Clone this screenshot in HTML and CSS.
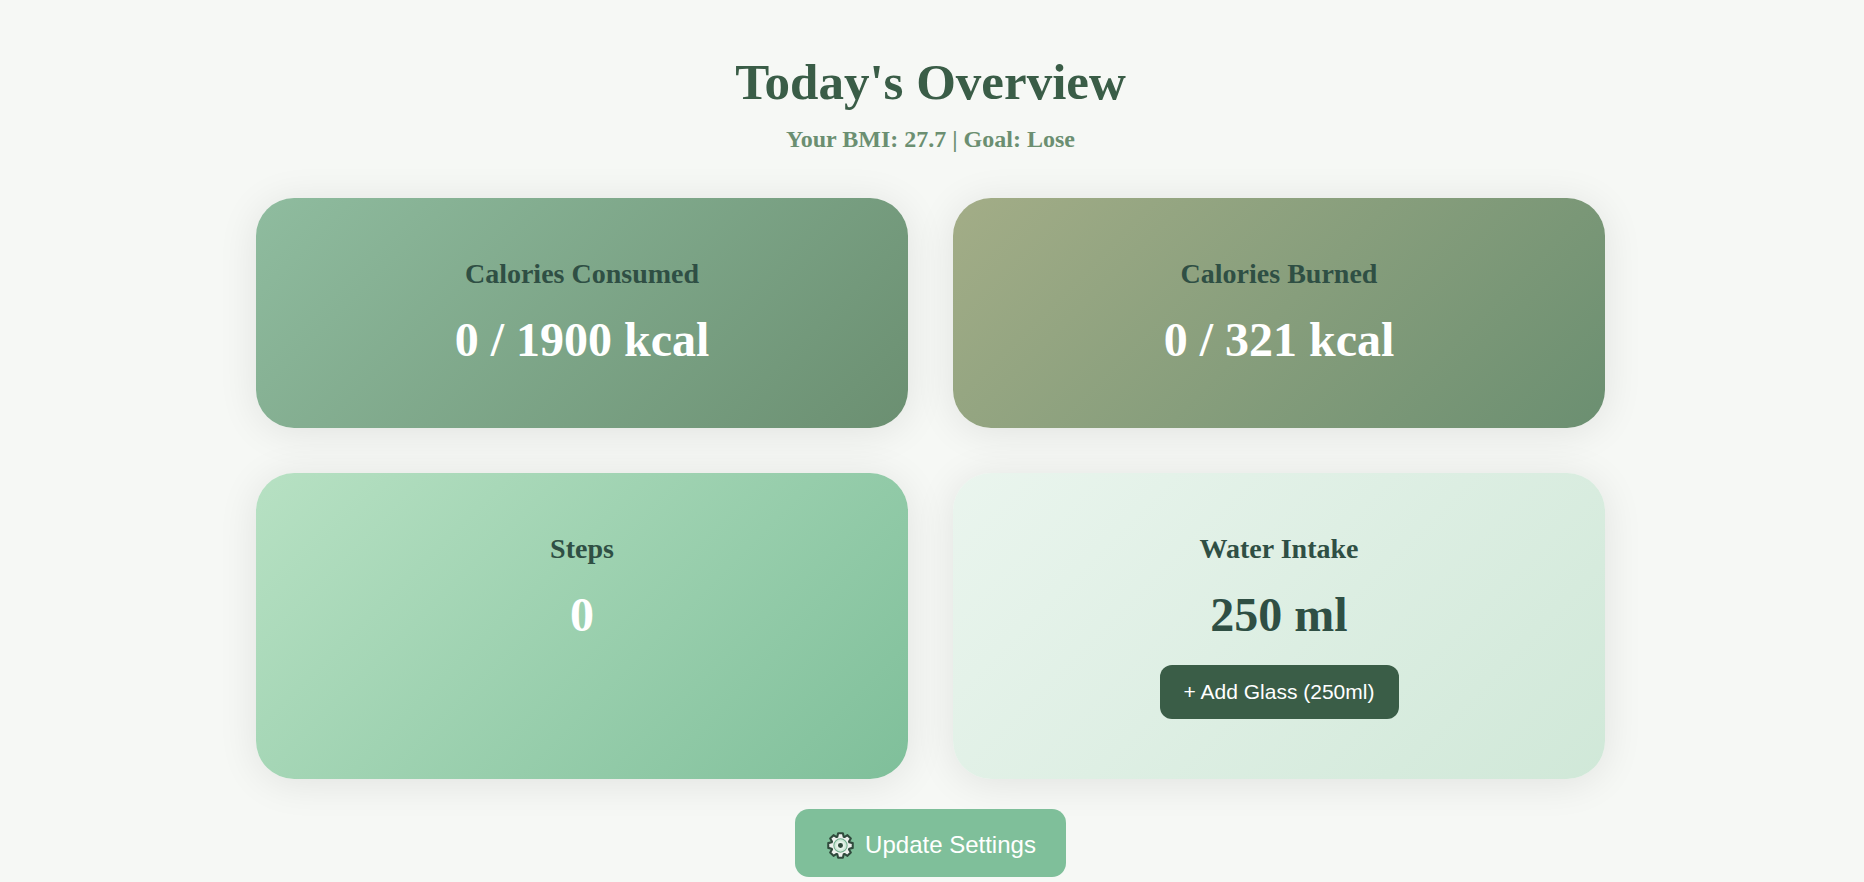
FILE: index.html
```html
<!DOCTYPE html>
<html lang="en">
<head>
    <meta charset="UTF-8">
    <meta name="viewport" content="width=device-width, initial-scale=1.0">
    <title>Today's Overview</title>
    <link rel="stylesheet" href="styles.css">
</head>
<body>
    <main class="dashboard">
        <h1>Today's Overview</h1>
        <p class="subtitle">Your BMI: 27.7 | Goal: Lose</p>

        <div class="cards">
            <div class="card card-consumed">
                <h3>Calories Consumed</h3>
                <div class="value">0 / 1900 kcal</div>
            </div>
            <div class="card card-burned">
                <h3>Calories Burned</h3>
                <div class="value">0 / 321 kcal</div>
            </div>
            <div class="card card-steps">
                <h3>Steps</h3>
                <div class="value">0</div>
            </div>
            <div class="card card-water">
                <h3>Water Intake</h3>
                <div class="value">250 ml</div>
                <button class="btn-water">+ Add Glass (250ml)</button>
            </div>
        </div>

        <a href="#" class="btn-settings">
            <svg class="gear" viewBox="-13 -13 26 26" width="27" height="27" aria-hidden="true">
                <path d="M-2.29-11.78L2.29-11.78L3.08-8.46L3.8-8.16L6.71-9.95L9.95-6.71L8.16-3.8L8.46-3.08L11.78-2.29L11.78 2.29L8.46 3.08L8.16 3.8L9.95 6.71L6.71 9.95L3.8 8.16L3.08 8.46L2.29 11.78L-2.29 11.78L-3.08 8.46L-3.8 8.16L-6.71 9.95L-9.95 6.71L-8.16 3.8L-8.46 3.08L-11.78 2.29L-11.78-2.29L-8.46-3.08L-8.16-3.8L-9.95-6.71L-6.71-9.95L-3.8-8.16L-3.08-8.46Z" fill="#eef1ee" stroke="#2f4a3c" stroke-width="2" stroke-linejoin="round"/>
                <circle r="6.4" fill="#cfe8d8" stroke="#6fae8c" stroke-width="1"/>
                <circle r="4.2" fill="#e6f3ea"/>
                <circle r="2.4" fill="#2f4a3c"/>
            </svg>
            <span>Update Settings</span>
        </a>
    </main>
</body>
</html>
```

FILE: styles.css
```css
/* General */
* {
    margin: 0;
    padding: 0;
    box-sizing: border-box;
}

body {
    background-color: #f6f8f5;
    font-family: "Liberation Serif", "Times New Roman", serif;
    height: 882px;
    padding-right: 3px;
    overflow: hidden;
}

.dashboard {
    width: 1349px;
    margin: 0 auto;
    padding-top: 48px;
    display: flex;
    flex-direction: column;
    align-items: center;
    text-align: center;
}

h1 {
    color: #3a5d47;
    font-size: 51px;
    line-height: 68px;
}

.subtitle {
    color: #6b8f71;
    font-size: 24px;
    font-weight: bold;
    line-height: 30px;
    margin-top: 8px;
}

/* Cards */
.cards {
    width: 100%;
    display: grid;
    grid-template-columns: 1fr 1fr;
    grid-template-rows: 230px 306px;
    gap: 45px;
    margin-top: 44px;
}

.card {
    border-radius: 38px;
    padding: 61px 32px 0;
    box-shadow: 0 4px 40px rgba(0, 0, 0, 0.09);
    color: #fff;
}

.card h3 {
    color: #2f4f44;
    font-size: 28px;
    line-height: 30px;
}

.value {
    font-size: 48px;
    font-weight: bold;
    line-height: 56px;
    margin-top: 23px;
}

.card-consumed {
    background: linear-gradient(135deg, #8fbc9f, #6b8f71);
}

.card-burned {
    background: linear-gradient(135deg, #a3ad87, #6b8f71);
}

.card-steps {
    background: linear-gradient(135deg, #b7e1c3, #7fbf9a);
}

.card-water {
    background: linear-gradient(135deg, #eaf5ee, #d0e8d8);
}

.card-water .value {
    color: #2f4f44;
}

/* Buttons */
.btn-water {
    background-color: #3a5d47;
    color: #fff;
    border: none;
    border-radius: 12px;
    font-family: "Liberation Sans", Arial, sans-serif;
    font-size: 21px;
    width: 239px;
    height: 54px;
    margin-top: 22px;
}

.btn-settings {
    display: flex;
    align-items: center;
    justify-content: center;
    gap: 11px;
    width: 271px;
    height: 68px;
    margin-top: 30px;
    padding-left: 2px;
    background-color: #7fbf9a;
    border-radius: 14px;
    color: #fff;
    font-family: "Liberation Sans", Arial, sans-serif;
    font-size: 24px;
    text-decoration: none;
}

.btn-settings span {
    position: relative;
    top: 2px;
}

.gear {
    flex-shrink: 0;
    position: relative;
    top: 2px;
}
```
